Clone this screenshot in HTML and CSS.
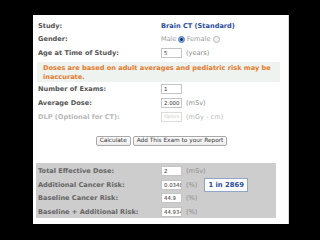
FILE: index.html
```html
<!DOCTYPE html>
<html lang="en">
<head>
    <meta charset="UTF-8">
    <title>Dose Calculator</title>
    <link rel="stylesheet" href="styles.css">
</head>
<body>
    <div class="panel">
        <div class="row">
            <span class="label">Study:</span>
            <span class="study">Brain CT (Standard)</span>
        </div>
        <div class="row">
            <span class="label">Gender:</span>
            <span class="value">
                <span class="muted">Male</span><span class="radio checked"></span>
                <span class="muted gap">Female</span><span class="radio"></span>
            </span>
        </div>
        <div class="row">
            <span class="label">Age at Time of Study:</span>
            <span class="value"><span class="box">5</span><span class="unit">(years)</span></span>
        </div>

        <div class="notice">Doses are based on adult averages and pediatric risk may be inaccurate.</div>

        <div class="row wide">
            <span class="label">Number of Exams:</span>
            <span class="value"><span class="box">1</span></span>
        </div>
        <div class="row wide">
            <span class="label">Average Dose:</span>
            <span class="value"><span class="box">2.000</span><span class="unit">(mSv)</span></span>
        </div>
        <div class="row wide faded">
            <span class="label">DLP (Optional for CT):</span>
            <span class="value"><span class="box hint">Option</span><span class="unit">(mGy - cm)</span></span>
        </div>

        <div class="buttons">
            <span class="btn">Calculate</span>
            <span class="btn">Add This Exam to your Report</span>
        </div>

        <div class="results">
            <div class="row">
                <span class="label">Total Effective Dose:</span>
                <span class="value"><span class="box">2</span><span class="unit">(mSv)</span></span>
            </div>
            <div class="row">
                <span class="label">Additional Cancer Risk:</span>
                <span class="value"><span class="box">0.0348</span><span class="unit">(%)</span><span class="odds">1 in 2869</span></span>
            </div>
            <div class="row">
                <span class="label">Baseline Cancer Risk:</span>
                <span class="value"><span class="box">44.9</span><span class="unit">(%)</span></span>
            </div>
            <div class="row">
                <span class="label">Baseline + Additional Risk:</span>
                <span class="value"><span class="box">44.934</span><span class="unit">(%)</span></span>
            </div>
        </div>
    </div>
</body>
</html>
```

FILE: styles.css
```css
body {
    margin: 0;
    padding: 15px 0 0 33px;
    background: #000;
    font-family: "DejaVu Sans", Verdana, sans-serif;
    font-size: 6.6px;
    color: #555;
}
.panel {
    width: 247px;
    height: 205px;
    padding: 4px 4px 0 4px;
    background: #fff;
    border-right: 1px solid #d8d8d8;
}
.row {
    display: grid;
    grid-template-columns: 123px 1fr;
    align-items: center;
    height: 13.5px;
    padding-left: 1px;
}
.row.wide {
    height: 14px;
}
.label {
    font-weight: bold;
    color: #555;
    white-space: nowrap;
}
.value {
    display: flex;
    align-items: center;
}
.study {
    font-weight: bold;
    color: #2d4e9e;
}
.muted {
    color: #9a9a9a;
}
.muted.gap {
    margin-left: 2px;
}
.radio {
    display: inline-block;
    box-sizing: border-box;
    width: 7px;
    height: 7px;
    margin: 0 0 0 1px;
    border: 1px solid #b8b8b8;
    border-radius: 50%;
    background: #f2f2f2;
}
.radio.checked {
    border-color: #4a78c8;
    background: radial-gradient(circle, #1f2f55 0 1.2px, #7fb0ea 1.6px);
}
.muted.gap + .radio {
    margin-left: 3px;
}
.box {
    display: inline-block;
    box-sizing: border-box;
    width: 21px;
    height: 10px;
    padding: 0 2px;
    border: 1px solid #c4c4c4;
    background: #fff;
    font-size: 5.4px;
    line-height: 8px;
    color: #333;
    overflow: hidden;
    white-space: nowrap;
}
.unit {
    margin-left: 4px;
    color: #8a8a8a;
}
.notice {
    margin: 2.5px 4px 0 0;
    padding: 2px 6px 2px 6px;
    height: 16px;
    background: #eef3f0;
    color: #e57a2c;
    font-weight: bold;
    line-height: 8.5px;
}
.faded .label,
.faded .unit {
    color: #b8b8b8;
}
.box.hint {
    color: #c8c8c8;
    border-color: #dcdcdc;
    font-size: 4.6px;
}
.buttons {
    display: flex;
    justify-content: center;
    gap: 2px;
    margin: 12px 0 0 2px;
}
.btn {
    box-sizing: border-box;
    height: 9.5px;
    padding: 0 3px;
    border: 1px solid #a9a9a9;
    border-radius: 2px;
    background: linear-gradient(#ffffff, #ececec);
    color: #333;
    font-size: 5.8px;
    line-height: 7.5px;
}
.results {
    margin: 17.5px 8px 0 -1px;
    padding-top: 1.5px;
    height: 53.5px;
    background: #cdcdcd;
}
.results .row {
    padding-left: 2px;
}
.results .label {
    color: #666;
}
.results .unit {
    color: #8c8c8c;
}
.odds {
    margin-left: 7px;
    padding: 0 3px;
    height: 14px;
    box-sizing: border-box;
    border: 1px solid #8fa5c8;
    background: #fff;
    color: #2d4e9e;
    font-weight: bold;
    font-size: 6.8px;
    line-height: 12px;
}
```
